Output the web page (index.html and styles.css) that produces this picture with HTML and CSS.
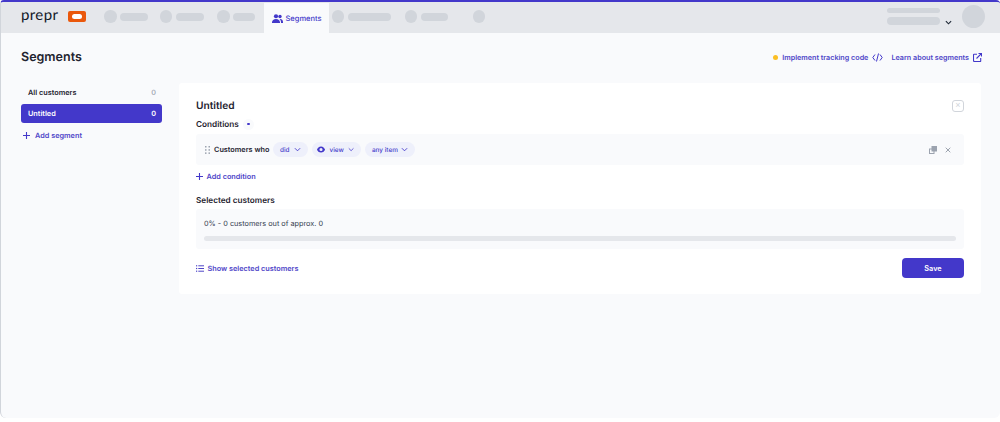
FILE: index.html
```html
<!DOCTYPE html>
<html lang="en">
<head>
  <meta charset="UTF-8" />
  <title>Segments</title>
  <link rel="stylesheet" href="styles.css">
</head>

<body>
<div class="app">
  <nav class="topbar">
    <span class="logo">prepr</span>
    <span class="env-badge"><span></span></span>

    <div class="nav-skel first"><i class="dot"></i><i class="bar w28"></i></div>
    <div class="nav-skel"><i class="dot"></i><i class="bar w28"></i></div>
    <div class="nav-skel third"><i class="dot"></i><i class="bar w22"></i></div>

    <div class="nav-tab">
      <svg width="11" height="9" viewBox="0 0 22 18" fill="currentColor"><circle cx="8" cy="4.500" r="4.200"/><path d="M0 17c0-4.600 3.400-7 8-7s8 2.400 8 7v1H0z"/><circle cx="16" cy="5" r="3.400"/><path d="M15 10c4.200-.6 7 2 7 6v2h-4v-1c0-2.800-1-5-3-7z"/></svg>
      Segments
    </div>

    <div class="nav-skel tight"><i class="dot"></i><i class="bar w43"></i></div>
    <div class="nav-skel after-tab"><i class="dot"></i><i class="bar w27"></i></div>
    <div class="nav-skel wide"><i class="dot"></i></div>

    <div class="account">
      <div class="account-lines"><i class="line-thin"></i><i class="line-thick"></i></div>
      <svg class="account-chev" width="7" height="5" viewBox="0 0 8 5" fill="none" stroke="#1f2937" stroke-width="1.300"><path d="M1 1l3 3 3-3"/></svg>
      <i class="avatar"></i>
    </div>
  </nav>

  <main class="page">
    <header class="page-head">
      <h1>Segments</h1>
      <div class="page-links">
        <i class="status-dot"></i>
        <a>Implement tracking code</a>
        <svg class="code-ico" width="11" height="9" viewBox="0 0 11 9" fill="none" stroke="currentColor" stroke-width="1"><path d="M3 1.500L.8 4.500 3 7.500M8 1.500l2.200 3-2.200 3M6.500.5l-2 8"/></svg>
        <a class="learn">Learn about segments</a>
        <svg class="ext-ico" width="9" height="9" viewBox="0 0 9 9" fill="none" stroke="currentColor" stroke-width="1.100"><path d="M4 1.300H1a.5.5 0 0 0-.5.5v5.700a1 1 0 0 0 1 1h5.700a.5.5 0 0 0 .5-.5V5M3.500 5.500L8.300.7M5.500.5h3v3"/></svg>
      </div>
    </header>

    <div class="columns">
      <aside class="sidebar">
        <div class="seg-item"><span>All customers</span><span class="count">0</span></div>
        <div class="seg-item active"><span>Untitled</span><span>0</span></div>
        <a class="add-link add-segment">
          <svg class="plus" width="7" height="7" viewBox="0 0 7 7"><path d="M3.500 0v7M0 3.500h7"/></svg>
          Add segment
        </a>
      </aside>

      <section class="card">
        <div class="card-title">
          <h2>Untitled</h2>
          <button class="close-box">×</button>
        </div>
        <div class="section-label">Conditions <span class="hint"><i></i></span></div>

        <div class="condition">
          <svg class="grip" width="5" height="8" viewBox="0 0 5 8" fill="#9ca3af"><rect width="1.500" height="1.500"/><rect x="3.500" width="1.500" height="1.500"/><rect y="3.200" width="1.500" height="1.500"/><rect x="3.500" y="3.200" width="1.500" height="1.500"/><rect y="6.400" width="1.500" height="1.500"/><rect x="3.500" y="6.400" width="1.500" height="1.500"/></svg>
          <strong>Customers who</strong>
          <span class="pill did">did<svg class="chev" width="7" height="5" viewBox="0 0 8 5"><path d="M1 1l3 3 3-3"/></svg></span>
          <span class="pill view">
            <svg width="9" height="7" viewBox="0 0 18 14" fill="currentColor"><path fill-rule="evenodd" d="M9 0c4.500 0 7.800 3.200 9 7-1.200 3.800-4.500 7-9 7s-7.800-3.200-9-7c1.200-3.800 4.500-7 9-7zm0 3.500a3.500 3.500 0 1 0 0 7 3.500 3.500 0 0 0 0-7z"/></svg>
            view<svg class="chev" width="7" height="5" viewBox="0 0 8 5"><path d="M1 1l3 3 3-3"/></svg>
          </span>
          <span class="pill item">any item<svg class="chev" width="7" height="5" viewBox="0 0 8 5"><path d="M1 1l3 3 3-3"/></svg></span>
          <div class="row-actions">
            <svg width="8" height="8" viewBox="0 0 8 8" fill="#9ca3af"><rect x="2.500" width="5.500" height="5.500"/><path d="M0 2.500h5.500V8H0zm1 1V7h3.500V3.500z" fill-rule="evenodd"/></svg>
            <svg width="6" height="6" viewBox="0 0 6 6" stroke="#9ca3af" stroke-width="1"><path d="M.7.700l4.600 4.600M5.300.7L.7 5.300"/></svg>
          </div>
        </div>

        <a class="add-link add-condition">
          <svg class="plus" width="7" height="7" viewBox="0 0 7 7"><path d="M3.500 0v7M0 3.500h7"/></svg>
          Add condition
        </a>

        <div class="section-label selected-label">Selected customers</div>
        <div class="selected-box">
          <div class="selected-text">0% - 0 customers out of approx. 0</div>
          <div class="progress"></div>
        </div>

        <div class="card-foot">
          <a class="show-link">
            <svg width="8" height="7" viewBox="0 0 8 7" fill="currentColor"><rect width="1.200" height="1.200" y=".2"/><rect x="2.300" y=".3" width="5.700" height="1"/><rect y="2.900" width="1.200" height="1.200"/><rect x="2.300" y="3" width="5.700" height="1"/><rect y="5.600" width="1.200" height="1.200"/><rect x="2.300" y="5.700" width="5.700" height="1"/></svg>
            Show selected customers
          </a>
          <button class="save-btn">Save</button>
        </div>
      </section>
    </div>
  </main>
</div>
</body>
</html>
```

FILE: styles.css
```css
* {
  box-sizing: border-box;
}

html, body {
  height: 100%;
}

body {
  margin: 0;
  background-color: #ffffff;
  font-family: 'Inter', sans-serif;
  color: #1f2430;
  text-rendering: geometricPrecision;
  overflow: hidden;
}

i {
  display: block;
}

a {
  color: #4f46c8;
}

.app {
  height: 418px;
  background-color: #f9fafc;
  border-top: 2px solid #4338ca;
  border-left: 1px solid #d1d5db;
  border-radius: 4px 4px 6px 6px;
  overflow: hidden;
}

/* top nav */
.topbar {
  height: 31px;
  background-color: #e5e7eb;
  display: flex;
  align-items: center;
  padding-left: 20px;
}

.logo {
  font-family: 'Lato', sans-serif;
  font-size: 15px;
  letter-spacing: 0.4px;
  color: #111827;
  line-height: 31px;
  width: 47px;
  margin-top: -4px;
}

.env-badge {
  width: 18px;
  height: 11px;
  border-radius: 2px;
  background-color: #ea580c;
  display: flex;
  align-items: center;
  justify-content: center;
  margin-top: -3px;
}

.env-badge span {
  width: 10px;
  height: 5px;
  border-radius: 3px;
  background-color: #fff;
}

.nav-skel {
  display: flex;
  align-items: center;
  gap: 3.500px;
  margin-left: 11.500px;
  margin-top: -2px;
}

.nav-skel.first {
  margin-left: 18px;
}

.nav-skel.third {
  margin-left: 13.500px;
}

.nav-skel.tight {
  margin-left: 3px;
}

.nav-skel.after-tab {
  margin-left: 14px;
}

.nav-skel.wide {
  margin-left: 25px;
}

.dot {
  width: 12.500px;
  height: 12.500px;
  border-radius: 50%;
  background-color: #d1d5db;
}

.bar {
  height: 8px;
  border-radius: 4px;
  background-color: #d1d5db;
}

.w22 { width: 22px; }
.w27 { width: 27px; }
.w28 { width: 28px; }
.w43 { width: 43px; }

.nav-tab {
  width: 65px;
  height: 30px;
  margin-left: 8.500px;
  margin-top: 1px;
  background-color: #f9fafc;
  color: #4338ca;
  font-size: 7.500px;
  font-weight: 500;
  display: flex;
  align-items: center;
  gap: 3px;
  padding-left: 8px;
}

.account {
  margin-left: auto;
  display: flex;
  align-items: center;
  padding-right: 15px;
}

.account-lines {
  display: flex;
  flex-direction: column;
  gap: 4px;
  margin-top: -3px;
}

.line-thin {
  width: 53px;
  height: 5px;
  border-radius: 3px;
  background-color: #d1d5db;
}

.line-thick {
  width: 53px;
  height: 8px;
  border-radius: 4px;
  background-color: #d1d5db;
}

.account-chev {
  margin: 9px 10px 0 5px;
}

.avatar {
  width: 23px;
  height: 23px;
  border-radius: 50%;
  background-color: #d1d5db;
  margin-top: -2px;
}

/* page */
.page {
  padding: 0 18px 0 20px;
}

.page-head {
  height: 50px;
  padding-bottom: 1px;
  display: flex;
  align-items: center;
  justify-content: space-between;
}

h1 {
  margin: 0;
  font-size: 12.500px;
  font-weight: 600;
}

.page-links {
  display: flex;
  align-items: center;
  font-size: 7.200px;
  font-weight: 600;
  color: #4338ca;
}

.status-dot {
  width: 5.500px;
  height: 5.500px;
  border-radius: 50%;
  background-color: #fbbf24;
  margin-right: 4px;
}

.code-ico {
  margin: 0 0 0 4px;
}

.learn {
  margin-left: 8px;
}

.ext-ico {
  margin-left: 4px;
}

.columns {
  display: flex;
  align-items: flex-start;
  gap: 17px;
}

/* sidebar */
.sidebar {
  width: 141px;
}

.seg-item {
  height: 18.500px;
  display: flex;
  align-items: center;
  justify-content: space-between;
  padding: 0 6px 0 7px;
  margin-bottom: 2.500px;
  border-radius: 3px;
  font-size: 7.300px;
  font-weight: 600;
}

.seg-item .count {
  color: #9ca3af;
  font-weight: 500;
}

.seg-item.active {
  background-color: #4338ca;
  color: #fff;
}

.add-link {
  display: flex;
  align-items: center;
  font-size: 7.300px;
  font-weight: 600;
  color: #4f46c8;
}

.plus {
  fill: none;
  stroke: #4338ca;
  stroke-width: 1.100;
}

.add-segment {
  margin-top: 8px;
  padding-left: 2px;
  height: 10px;
  gap: 5px;
}

/* main card */
.card {
  width: 802px;
  height: 211px;
  background-color: #fff;
  border-radius: 3px;
  padding: 0 17px;
}

.card-title {
  height: 35px;
  padding-top: 10px;
  display: flex;
  align-items: center;
  justify-content: space-between;
}

h2 {
  margin: 0;
  font-size: 10.200px;
  font-weight: 600;
}

.close-box {
  width: 12px;
  height: 12px;
  padding: 0;
  border: 1px solid #d1d5db;
  border-radius: 3px;
  background: #fff;
  color: #d1d5db;
  font-size: 9px;
  line-height: 9px;
}

.section-label {
  font-size: 8.200px;
  font-weight: 600;
  display: flex;
  align-items: center;
  gap: 4px;
  height: 12px;
}

.hint {
  width: 11px;
  height: 11px;
  border-radius: 50%;
  background-color: #f9fafc;
  display: flex;
  align-items: center;
  justify-content: center;
}

.hint i {
  width: 2.500px;
  height: 2.500px;
  border-radius: 50%;
  background-color: #4338ca;
}

.condition {
  height: 31px;
  margin-top: 4px;
  background-color: #f9fafc;
  border-radius: 3px;
  display: flex;
  align-items: center;
  padding: 0 13px 0 9px;
  font-size: 7.300px;
}

.condition strong {
  font-weight: 600;
  margin-left: 4px;
  margin-right: 3.500px;
}

.pill {
  height: 15px;
  border-radius: 8px;
  background-color: #eef0fb;
  color: #4338ca;
  font-size: 6.400px;
  font-weight: 500;
  display: flex;
  align-items: center;
  padding: 0 7px;
  margin-right: 4px;
}

.pill.did {
  width: 35px;
}

.pill.view {
  width: 49px;
  gap: 4px;
  padding-left: 5.500px;
}

.pill.item {
  width: 50px;
}

.chev {
  fill: none;
  stroke: #4338ca;
  stroke-width: 1;
  margin-left: auto;
}

.row-actions {
  margin-left: auto;
  display: flex;
  align-items: center;
  gap: 8px;
}

.add-condition {
  margin-top: 6px;
  height: 11px;
  gap: 3.500px;
}

.selected-label {
  margin-top: 12px;
}

.selected-box {
  height: 40px;
  margin-top: 3px;
  background-color: #f9fafc;
  border-radius: 3px;
  padding: 8.500px 8px 0;
}

.selected-text {
  font-size: 7.300px;
  line-height: 12px;
  color: #374151;
}

.progress {
  height: 4.500px;
  margin-top: 6.500px;
  border-radius: 3px;
  background-color: #e5e7eb;
}

.card-foot {
  display: flex;
  align-items: center;
  justify-content: space-between;
  margin-top: 9px;
}

.show-link {
  display: flex;
  align-items: center;
  gap: 3.500px;
  font-size: 7.300px;
  font-weight: 600;
  color: #4f46c8;
}

.save-btn {
  width: 62px;
  height: 20px;
  padding: 0;
  border: none;
  border-radius: 4px;
  background-color: #4338ca;
  color: #fff;
  font-family: inherit;
  font-size: 7.300px;
  font-weight: 600;
}
```
